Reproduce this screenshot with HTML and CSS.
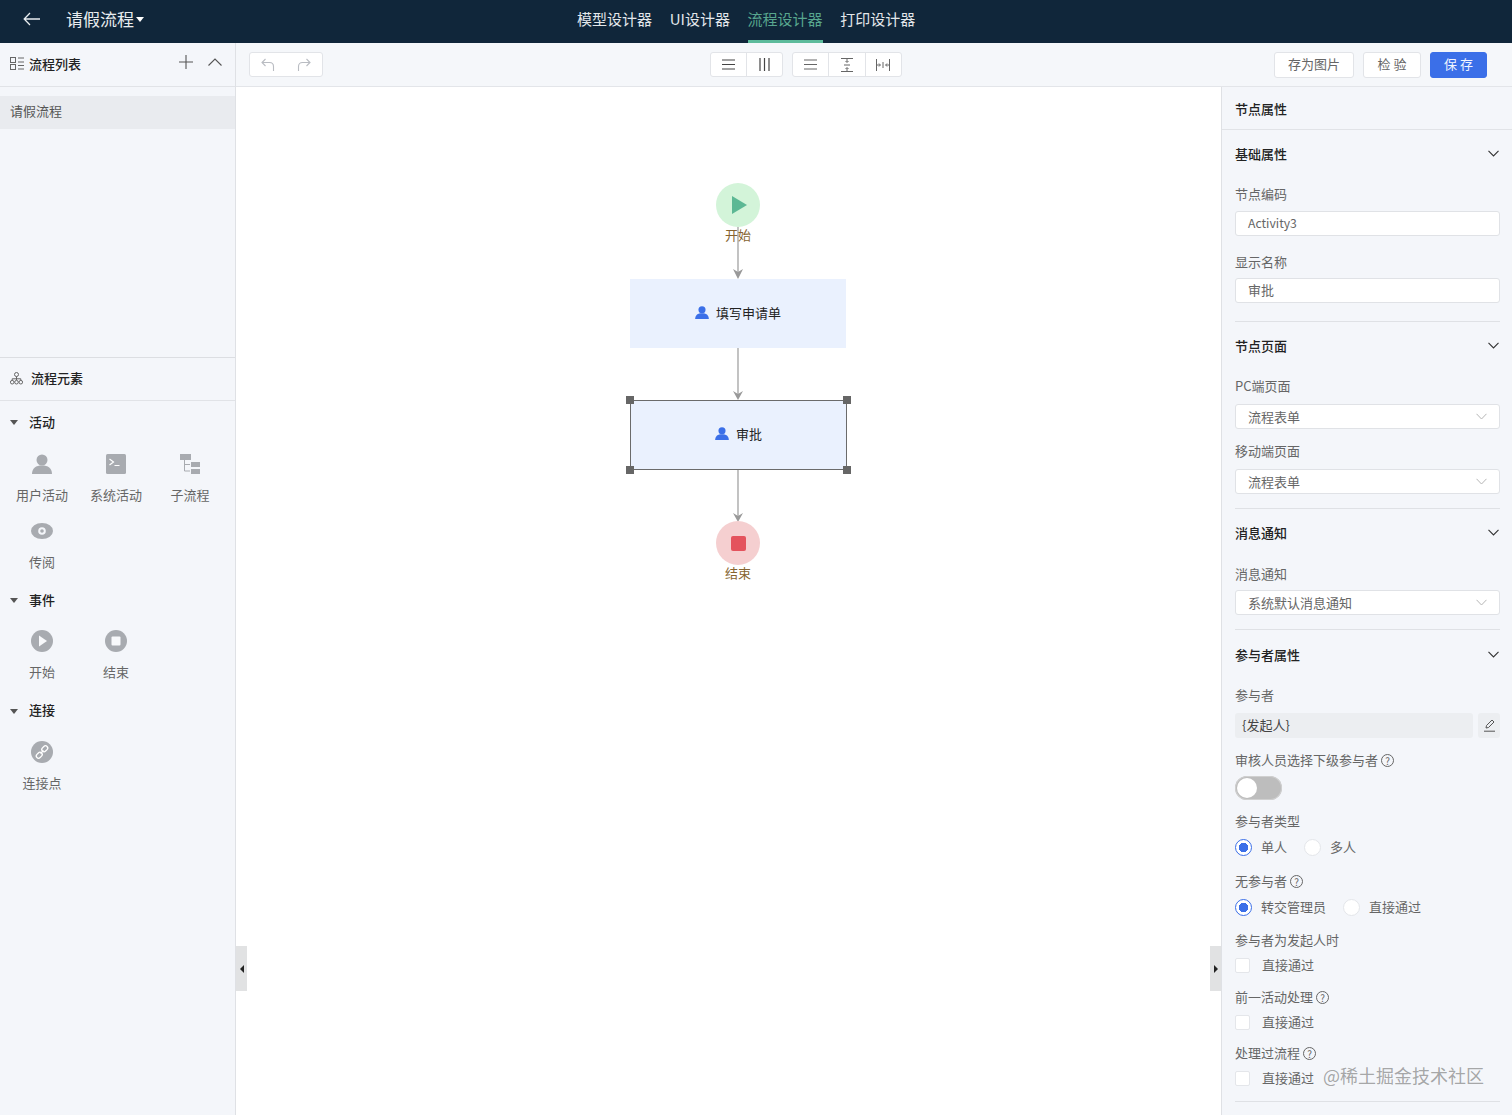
FILE: index.html
```html
<!DOCTYPE html>
<html lang="zh-CN">
<head>
<meta charset="utf-8">
<title>请假流程</title>
<link rel="stylesheet" href="styles.css">
</head>
<body>
<div class="app">
  <header class="topbar">
    <div class="brand">
      <svg class="back" width="18" height="14" viewBox="0 0 18 14"><path d="M7 1 1.2 7 7 13M1.2 7H17" fill="none" stroke="#e8ecef" stroke-width="1.3"/></svg>
      <span class="brand-name">请假流程</span>
      <span class="caret-white"></span>
    </div>
    <nav class="nav">
      <a class="nav-item">模型设计器</a>
      <a class="nav-item">UI设计器</a>
      <a class="nav-item active">流程设计器</a>
      <a class="nav-item">打印设计器</a>
    </nav>
  </header>
  <div class="body">
    <aside class="left">
      <section class="list-panel">
        <div class="panel-head">
          <svg class="head-icon" width="14" height="14" viewBox="0 0 14 14" fill="none" stroke="#666" stroke-width="1"><rect x=".5" y=".5" width="5" height="5"/><rect x=".5" y="7.5" width="5" height="5"/><path d="M8 1h6M8 5h6M8 8.500h6M8 12h6"/></svg>
          <span class="head-title">流程列表</span>
          <span class="head-actions">
            <svg width="14" height="14" viewBox="0 0 14 14"><path d="M7 0v14M0 7h14" stroke="#555" stroke-width="1.1"/></svg>
            <svg width="14" height="8" viewBox="0 0 14 8"><path d="M.5 7.500 7 1l6.500 6.500" fill="none" stroke="#555" stroke-width="1.1"/></svg>
          </span>
        </div>
        <div class="list-row">请假流程</div>
      </section>
      <section class="element-panel">
        <div class="panel-head el-head">
          <svg class="head-icon" width="13" height="13" viewBox="0 0 13 13" fill="none" stroke="#666" stroke-width="1"><circle cx="6.500" cy="2.500" r="2"/><circle cx="2.200" cy="10.200" r="1.800"/><circle cx="6.500" cy="10.200" r="1.800"/><circle cx="10.800" cy="10.200" r="1.800"/><path d="M6.500 4.500v3.500M2.200 8.400V6.800h8.600v1.600"/></svg>
          <span class="head-title">流程元素</span>
        </div>
        <div class="group-head first"><span class="caret-dark"></span>活动</div>
        <div class="tiles">
          <div class="tile"><div class="tile-icon"><svg width="20" height="20" viewBox="0 0 20 20" fill="#a8abb0"><circle cx="10" cy="6" r="5.500"/><path d="M0 20c0-6 4-8.500 10-8.500S20 14 20 20z"/></svg></div><span>用户活动</span></div>
          <div class="tile"><div class="tile-icon"><svg width="20" height="20" viewBox="0 0 20 20"><rect width="20" height="20" rx="1.500" fill="#a8abb0"/><path d="m3.500 5 4 3-4 3M8.500 11.500h5" fill="none" stroke="#fff" stroke-width="1.200"/></svg></div><span>系统活动</span></div>
          <div class="tile"><div class="tile-icon"><svg width="20" height="20" viewBox="0 0 20 20" fill="#a8abb0"><rect width="11" height="6"/><rect x="11" y="8" width="9" height="5"/><rect x="11" y="15" width="9" height="5"/><path d="M4.500 6v11H10M4.500 10.500H10" fill="none" stroke="#a8abb0"/></svg></div><span>子流程</span></div>
          <div class="tile"><div class="tile-icon"><svg width="22" height="16" viewBox="0 0 22 16"><ellipse cx="11" cy="8" rx="11" ry="8" fill="#a8abb0"/><circle cx="11" cy="8" r="3.800" fill="#f4f6fa"/><circle cx="11" cy="8" r="1.800" fill="#a8abb0"/></svg></div><span>传阅</span></div>
        </div>
        <div class="group-head"><span class="caret-dark"></span>事件</div>
        <div class="tiles">
          <div class="tile"><div class="tile-icon"><svg width="22" height="22" viewBox="0 0 22 22"><circle cx="11" cy="11" r="11" fill="#a8abb0"/><path d="M8 5.500 16 11l-8 5.500z" fill="#f8f9fb"/></svg></div><span>开始</span></div>
          <div class="tile"><div class="tile-icon"><svg width="22" height="22" viewBox="0 0 22 22"><circle cx="11" cy="11" r="11" fill="#a8abb0"/><rect x="6.500" y="6.500" width="9" height="9" rx="1" fill="#f8f9fb"/></svg></div><span>结束</span></div>
        </div>
        <div class="group-head last"><span class="caret-dark"></span>连接</div>
        <div class="tiles">
          <div class="tile"><div class="tile-icon"><svg width="22" height="22" viewBox="0 0 22 22"><circle cx="11" cy="11" r="11" fill="#a8abb0"/><g fill="none" stroke="#fff" stroke-width="1.300"><rect x="10.500" y="5.500" width="6.500" height="4.500" rx="2.250" transform="rotate(-45 13.750 7.750)"/><rect x="5" y="12" width="6.500" height="4.500" rx="2.250" transform="rotate(-45 8.250 14.250)"/><path d="m9.500 12.500 3-3"/></g></svg></div><span>连接点</span></div>
        </div>
      </section>
    </aside>
    <main class="main">
      <div class="toolbar">
        <div class="btn-group undo-group">
          <button class="tool wide"><svg width="14" height="13" viewBox="0 0 14 13" fill="none" stroke="#b9bcc2" stroke-width="1.100"><path d="M4.500 1 1 4.500 4.500 8M1 4.500h7.500c2.500 0 4 1.800 4 4V13"/></svg></button>
          <button class="tool wide"><svg width="14" height="13" viewBox="0 0 14 13" fill="none" stroke="#b9bcc2" stroke-width="1.100"><path d="M9.500 1 13 4.500 9.500 8M13 4.500H5.500c-2.500 0-4 1.800-4 4V13"/></svg></button>
        </div>
        <div class="btn-group align-a">
          <button class="tool"><svg width="13" height="11" viewBox="0 0 13 11" stroke="#444" stroke-width="1.200"><path d="M0 1h13M0 5.500h13M0 10h13"/></svg></button>
          <button class="tool sep"><svg width="11" height="13" viewBox="0 0 11 13" stroke="#444" stroke-width="1.200"><path d="M1 0v13M5.500 0v13M10 0v13"/></svg></button>
        </div>
        <div class="btn-group align-b">
          <button class="tool"><svg width="13" height="11" viewBox="0 0 13 11" stroke="#666" stroke-width="1"><path d="M0 1h13M0 5.500h13M0 10h13"/></svg></button>
          <button class="tool sep"><svg width="12" height="14" viewBox="0 0 12 14" fill="none" stroke="#666" stroke-width="1"><path d="M0 .5h12M0 13.500h12M3 7h6"/><path d="M6 1v3M4.500 3 6 4.500 7.500 3M6 13v-3M4.500 11 6 9.500 7.500 11"/></svg></button>
          <button class="tool sep"><svg width="14" height="12" viewBox="0 0 14 12" fill="none" stroke="#666" stroke-width="1"><path d="M.5 0v12M13.500 0v12M7 3v6"/><path d="M1 6h3M3 4.500 4.500 6 3 7.500M13 6h-3M11 4.500 9.500 6 11 7.500"/></svg></button>
        </div>
        <div class="actions">
          <button class="action a-image">存为图片</button>
          <button class="action a-check">检 验</button>
          <button class="action primary">保 存</button>
        </div>
      </div>
      <div class="work">
        <div class="canvas">
          <svg class="edges" width="985" height="1029" viewBox="0 0 985 1029" fill="none" stroke="#a3a3a3" stroke-width="1.300">
            <path d="M502 140v47M502 261v47M502 383v47"/>
            <path d="m497 182 5 10 5-10-5 3zM497 304l5 9 5-9-5 3zM497 426l5 9 5-9-5 3z" fill="#999" stroke="none"/>
          </svg>
          <div class="event start"><svg width="16" height="18" viewBox="0 0 16 18"><path d="M0 0 15 9 0 18z" fill="#5cb894"/></svg></div>
          <div class="event-label l-start">开始</div>
          <div class="task t-fill">
            <svg width="14" height="13" viewBox="0 0 20 19" fill="#3b6fe8"><circle cx="10" cy="5.500" r="5.200"/><path d="M0 19c0-6 4-8.500 10-8.500S20 13 20 19z"/></svg>
            <span>填写申请单</span>
          </div>
          <div class="task t-approve">
            <svg width="14" height="13" viewBox="0 0 20 19" fill="#3b6fe8"><circle cx="10" cy="5.500" r="5.200"/><path d="M0 19c0-6 4-8.500 10-8.500S20 13 20 19z"/></svg>
            <span>审批</span>
            <i class="handle tl"></i><i class="handle tr"></i><i class="handle bl"></i><i class="handle br"></i>
          </div>
          <div class="event end"><i class="stop"></i></div>
          <div class="event-label l-end">结束</div>
          <div class="collapse c-left"><span class="tri-left"></span></div>
          <div class="collapse c-right"><span class="tri-right"></span></div>
        </div>
        <aside class="props">
          <div class="props-title">节点属性</div>
          <section class="sec pb-18">
            <div class="sec-head"><span>基础属性</span><svg class="chev" width="11" height="7" viewBox="0 0 11 7"><path d="M.5.800 5.500 6l5-5.200" fill="none" stroke="#333" stroke-width="1.100"/></svg></div>
            <div class="label mt-5">节点编码</div>
            <div class="control gap-8"><span class="latin">Activity3</span></div>
            <div class="label mt-17">显示名称</div>
            <div class="control">审批</div>
          </section>
          <section class="sec pb-14">
            <div class="sec-head"><span>节点页面</span><svg class="chev" width="11" height="7" viewBox="0 0 11 7"><path d="M.5.800 5.500 6l5-5.200" fill="none" stroke="#333" stroke-width="1.100"/></svg></div>
            <div class="label mt-5">PC端页面</div>
            <div class="control select gap-9">流程表单<svg width="11" height="7" viewBox="0 0 11 7"><path d="M.5.800 5.500 6l5-5.200" fill="none" stroke="#b5b5b5"/></svg></div>
            <div class="label mt-13">移动端页面</div>
            <div class="control select gap-9">流程表单<svg width="11" height="7" viewBox="0 0 11 7"><path d="M.5.800 5.500 6l5-5.200" fill="none" stroke="#b5b5b5"/></svg></div>
          </section>
          <section class="sec pb-14">
            <div class="sec-head"><span>消息通知</span><svg class="chev" width="11" height="7" viewBox="0 0 11 7"><path d="M.5.800 5.500 6l5-5.200" fill="none" stroke="#333" stroke-width="1.100"/></svg></div>
            <div class="label mt-6">消息通知</div>
            <div class="control select">系统默认消息通知<svg width="11" height="7" viewBox="0 0 11 7"><path d="M.5.800 5.500 6l5-5.200" fill="none" stroke="#b5b5b5"/></svg></div>
          </section>
          <section class="sec pb-13">
            <div class="sec-head head-low"><span>参与者属性</span><svg class="chev" width="11" height="7" viewBox="0 0 11 7"><path d="M.5.800 5.500 6l5-5.200" fill="none" stroke="#333" stroke-width="1.100"/></svg></div>
            <div class="label mt-6">参与者</div>
            <div class="picker gap-9">
              <div class="picker-value">{发起人}</div>
              <div class="picker-edit"><svg width="13" height="13" viewBox="0 0 13 13" fill="none" stroke="#555"><path d="m3 9 .5-2.500L9 1l2 2-5.500 5.500zM1 12.200h11"/></svg></div>
            </div>
            <div class="label mt-13">审核人员选择下级参与者 <i class="help">?</i></div>
            <div class="switch"><i></i></div>
            <div class="label mt-12">参与者类型</div>
            <div class="radios">
              <label class="radio on"><i></i>单人</label>
              <label class="radio"><i></i>多人</label>
            </div>
            <div class="label mt-15">无参与者 <i class="help">?</i></div>
            <div class="radios">
              <label class="radio on"><i></i>转交管理员</label>
              <label class="radio"><i></i>直接通过</label>
            </div>
            <div class="label mt-14">参与者为发起人时</div>
            <label class="check"><i></i>直接通过</label>
            <div class="label mt-13">前一活动处理 <i class="help">?</i></div>
            <label class="check"><i></i>直接通过</label>
            <div class="label mt-12">处理过流程 <i class="help">?</i></div>
            <label class="check"><i></i>直接通过</label>
          </section>
        </aside>
      </div>
    </main>
  </div>
  <div class="watermark">@稀土掘金技术社区</div>
</div>
</body>
</html>
```
FILE: styles.css
```css
* { box-sizing: border-box; }
html, body { margin: 0; padding: 0; height: 100%; overflow: hidden; }
body {
  font-family: "Noto Sans CJK SC", "Noto Sans", sans-serif;
  font-size: 13px;
  color: #666;
  background: #f4f6fa;
}
.app { position: relative; width: 1512px; height: 1115px; display: flex; flex-direction: column; overflow: hidden; }

/* top bar */
.topbar {
  height: 43px; flex: none; background: #10263a;
  display: grid; grid-template-columns: 577px auto; align-items: center;
}
.brand { display: flex; align-items: center; height: 43px; padding: 0 0 5px 23px; color: #e8ecef; }
.back { margin-right: 25px; }
.brand-name { font-size: 17px; line-height: 24px; }
.caret-white { width: 0; height: 0; margin-left: 2px; border: 4.500px solid transparent; border-top: 5px solid #fff; border-bottom: 0; }
.nav { display: flex; gap: 17.7px; height: 43px; }
.nav-item { font-size: 15px; line-height: 37px; height: 43px; color: #e3e7ea; }
.nav-item.active { color: #58a68e; border-bottom: 3px solid #5dbb9b; }

.body { flex: 1; display: flex; min-height: 0; }

/* left */
.left { width: 236px; flex: none; border-right: 1px solid #dfe1e5; background: #f4f6fa; display: flex; flex-direction: column; }
.list-panel { height: 315px; flex: none; border-bottom: 1px solid #dcdee2; }
.panel-head { height: 43px; padding: 0 0 2px 10px; display: flex; align-items: center; border-bottom: 1px solid #e1e3e7; position: relative; }
.list-panel .panel-head { height: 44px; }
.head-icon { flex: none; margin-right: 5px; }
.head-title { color: #222; font-weight: 500; line-height: 20px; }
.head-actions { position: absolute; top: 12px; left: 179px; display: flex; gap: 15px; align-items: center; }
.list-row { margin-top: 9px; height: 33px; line-height: 30px; padding-left: 10px; background: #e9ebef; color: #555; }
.el-head .head-icon { margin-right: 8px; }
.group-head { height: 43px; padding-bottom: 3px; display: flex; align-items: center; color: #222; font-weight: 500; }
.group-head.first { margin-bottom: 1px; }
.group-head.last { height: 44px; }
.caret-dark { width: 0; height: 0; margin: 3px 11px 0 10px; border: 4px solid transparent; border-top: 5px solid #555; border-bottom: 0; }
.tiles { display: grid; grid-template-columns: repeat(3, 74px); padding-left: 5px; }
.tile { height: 67px; display: flex; flex-direction: column; align-items: center; color: #666; }
.tile-icon { height: 38px; display: flex; align-items: center; justify-content: center; flex: none; }
.tile span { line-height: 20px; margin-top: 2px; }

/* main */
.main { flex: 1; min-width: 0; display: flex; flex-direction: column; }
.toolbar { height: 44px; flex: none; display: flex; align-items: center; padding: 0 25px 0 13px; border-bottom: 1px solid #e3e5e9; background: #f5f7fa; }
.btn-group { display: flex; height: 25px; background: #fff; border: 1px solid #e2e4e8; border-radius: 3px; }
.undo-group { width: 74px; }
.align-a { margin-left: 387px; width: 73px; }
.align-b { margin-left: 9px; width: 110px; }
.tool { flex: 1; border: 0; background: none; padding: 0; display: flex; align-items: center; justify-content: center; }
.tool.sep { border-left: 1px solid #e2e4e8; }
.actions { margin-left: auto; display: flex; gap: 9px; }
.action { height: 26px; padding: 0 0 2px; font: inherit; color: #666; background: #fff; border: 1px solid #e2e4e8; border-radius: 3px; }
.a-image { width: 80px; }
.a-check { width: 58px; }
.action.primary { width: 57px; background: #3b6fe8; border-color: #3b6fe8; color: #f0f4ff; }

.work { flex: 1; display: flex; min-height: 0; }

/* canvas */
.canvas { flex: 1; position: relative; background: #fff; }
.edges { position: absolute; left: 0; top: 0; }
.event { position: absolute; width: 44px; height: 44px; left: 480px; border-radius: 50%; display: flex; align-items: center; justify-content: center; }
.start { top: 96px; background: #d3f4d9; padding-left: 3px; }
.end { top: 434px; background: #f5cfd0; }
.stop { width: 15px; height: 15px; border-radius: 2px; background: #e4535d; }
.event-label { position: absolute; left: 480px; width: 44px; text-align: center; line-height: 18px; color: #86632f; }
.l-start { top: 139px; }
.l-end { top: 477px; }
.task { position: absolute; left: 394px; display: flex; align-items: center; justify-content: center; gap: 7px; padding-bottom: 3px; background: #eaf1fe; color: #222; }
.t-fill { top: 192px; width: 216px; height: 69px; }
.t-approve { top: 313px; width: 217px; height: 70px; border: 1.500px solid #6b6b6b; }
.handle { position: absolute; width: 8px; height: 8px; background: #666; }
.tl { left: -5px; top: -5px; }
.tr { right: -5px; top: -5px; }
.bl { left: -5px; bottom: -5px; }
.br { right: -5px; bottom: -5px; }
.collapse { position: absolute; top: 859px; width: 11px; height: 45px; background: #e1e2e3; display: flex; align-items: center; justify-content: center; }
.c-left { left: 0; }
.c-right { right: 0; }
.tri-left { border: 4px solid transparent; border-right: 4px solid #222; border-left: 0; }
.tri-right { border: 4px solid transparent; border-left: 4px solid #222; border-right: 0; }

/* properties */
.props { width: 291px; flex: none; background: #f4f6fa; border-left: 1px solid #dfe1e5; overflow: hidden; }
.props-title { height: 43px; line-height: 43px; padding-left: 13px; color: #222; font-weight: 500; border-bottom: 1px solid #e1e3e7; }
.sec { margin: 0 12px 0 13px; border-bottom: 1px solid #dfe1e5; }
.pb-18 { padding-bottom: 18px; }
.pb-14 { padding-bottom: 14px; }
.pb-13 { padding-bottom: 13px; }
.sec-head { height: 50px; padding-bottom: 3px; display: flex; align-items: center; justify-content: space-between; color: #222; font-weight: 500; }
.head-low { padding-bottom: 1px; }
.chev { margin-right: 1px; }
.label { height: 18px; line-height: 18px; color: #666; display: flex; align-items: center; gap: 3px; }
.mt-5 { margin-top: 5px; }
.mt-6 { margin-top: 6px; }
.mt-12 { margin-top: 12px; }
.mt-13 { margin-top: 13px; }
.mt-14 { margin-top: 14px; }
.mt-15 { margin-top: 15px; }
.mt-17 { margin-top: 17px; }
.control { height: 25px; margin-top: 7px; padding: 0 12px; line-height: 21px; background: #fff; border: 1px solid #e0e2e6; border-radius: 3px; color: #666; }
.latin { font-size: 12.2px; }
.select { display: flex; align-items: center; justify-content: space-between; }
.gap-8 { margin-top: 8px; }
.gap-9 { margin-top: 9px; }
.picker { display: flex; gap: 5px; height: 25px; }
.picker-value { width: 238px; background: #eceef1; border-radius: 3px; line-height: 23px; padding-left: 7px; color: #444; }
.picker-edit { width: 22px; background: #eceef1; border-radius: 3px; display: flex; align-items: center; justify-content: center; }
.help { display: inline-block; width: 13px; height: 13px; border: 1px solid #666; border-radius: 50%; font-style: normal; font-size: 10px; line-height: 11px; text-align: center; color: #666; }
.switch { width: 47px; height: 24px; margin-top: 7px; border-radius: 12px; background: #bdbdbd; padding: 2px; box-shadow: inset 0 0 0 1px #d0d0d0; }
.switch i { display: block; width: 20px; height: 20px; border-radius: 50%; background: #fff; }
.radios { display: flex; gap: 17px; height: 20px; margin-top: 7px; }
.radio { display: flex; align-items: center; gap: 9px; line-height: 20px; color: #666; }
.radio i { width: 17px; height: 17px; border-radius: 50%; background: #fff; border: 1px solid #e4e6ea; }
.radio.on i { border: 1px solid #3b6fe8; background: radial-gradient(circle, #3b6fe8 0 4.500px, #fff 5px); }
.check { display: flex; align-items: center; gap: 12px; height: 20px; margin-top: 6px; line-height: 20px; color: #666; }
.check i { width: 15px; height: 15px; background: #fff; border: 1px solid #e4e6ea; border-radius: 2px; }

.watermark { position: absolute; left: 1323px; top: 1061px; font-size: 18px; line-height: 28px; color: rgba(120,120,120,.65); white-space: nowrap; }
```
